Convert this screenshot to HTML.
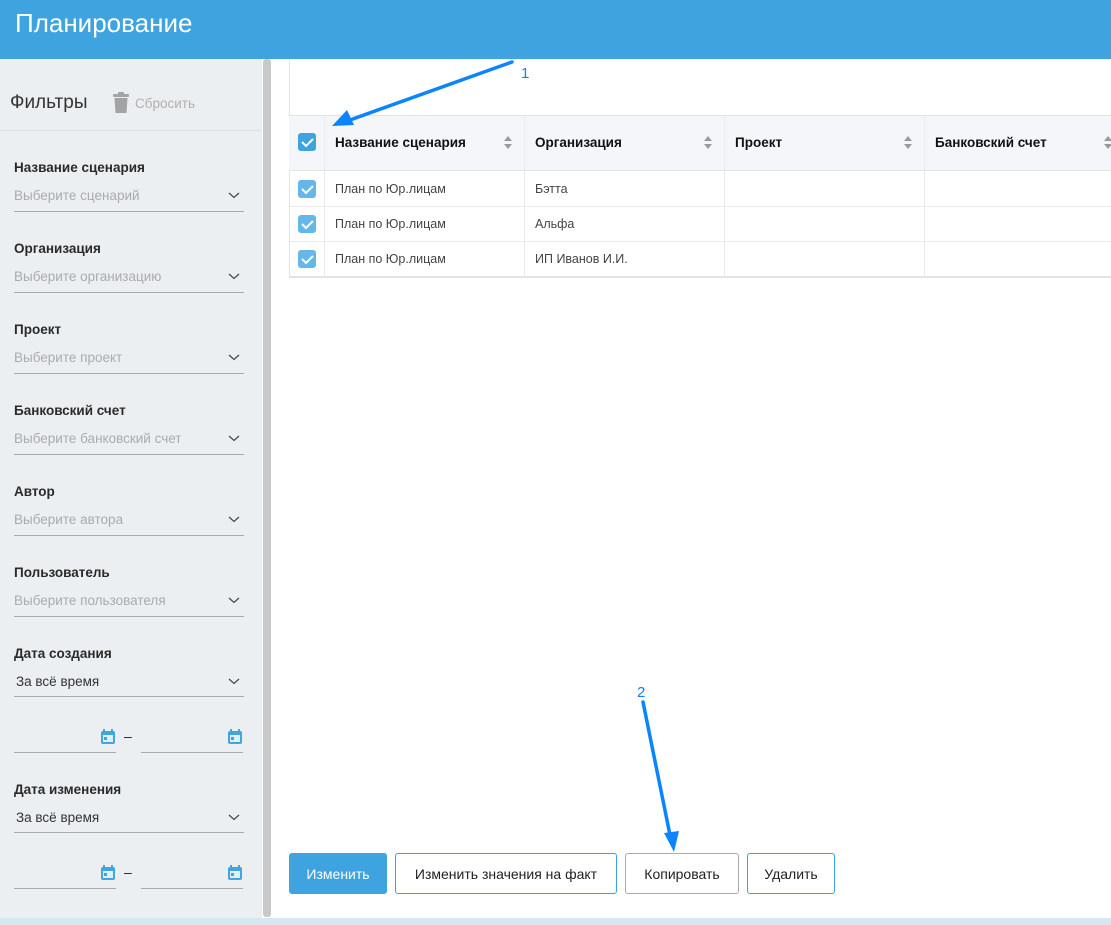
<!DOCTYPE html>
<html><head><meta charset="utf-8"><style>
*{margin:0;padding:0;box-sizing:border-box}
body{width:1111px;height:925px;position:relative;overflow:hidden;background:#fff;font-family:"Liberation Sans","DejaVu Sans",sans-serif;color:#222}
.a{position:absolute}
.hdr{left:0;top:0;width:1111px;height:59px;background:#3ea3df;color:#fff;font-size:26px;padding:8px 0 0 15px}
.side{left:0;top:59px;width:262px;height:859px;background:#eceff2}
.sb{left:263px;top:59px;width:8px;height:858px;background:#c9c9c9;border-radius:3px}
.lbl{left:14px;font-size:13.5px;font-weight:bold;color:#2a2a2a}
.ph{left:14px;font-size:13.5px;color:#a9abae}
.val{left:16px;font-size:13.5px;color:#333}
.ln{height:1px;background:#aaa}
.th{font-size:13.5px;font-weight:bold;color:#111}
.td{font-size:12.5px;color:#444}
.btn{top:853px;height:41px;border:1px solid #3ea3df;border-radius:3px;font-size:14px;display:flex;align-items:center;justify-content:center;color:#222;background:#fff}
</style></head><body>
<div class="a hdr">Планирование</div>
<div class="a side"></div>
<div class="a sb"></div>
<div class="a" style="left:0;top:918px;width:1111px;height:7px;background:#d3e8f0"></div>

<div class="a" style="left:10px;top:92px;font-size:19px;color:#333">Фильтры</div>
<svg class="a" style="left:112px;top:92px" width="18" height="21" viewBox="0 0 18 21"><rect x="1" y="2" width="16" height="3" rx="1" fill="#a3a3a3"/><rect x="6" y="0" width="6" height="3" rx="1" fill="#a3a3a3"/><path d="M2.5 6h13l-1 15h-11z" fill="#a3a3a3"/></svg>
<div class="a" style="left:135px;top:96px;font-size:13.5px;color:#b0b0b0">Сбросить</div>
<div class="a" style="left:0;top:130px;width:262px;height:1px;background:#dde0e3"></div>

<div class="a lbl" style="top:160px">Название сценария</div><div class="a ph" style="top:188px">Выберите сценарий</div><div class="a ln" style="left:14px;top:211px;width:230px"></div>
<div class="a lbl" style="top:241px">Организация</div><div class="a ph" style="top:269px">Выберите организацию</div><div class="a ln" style="left:14px;top:292px;width:230px"></div>
<div class="a lbl" style="top:322px">Проект</div><div class="a ph" style="top:350px">Выберите проект</div><div class="a ln" style="left:14px;top:373px;width:230px"></div>
<div class="a lbl" style="top:403px">Банковский счет</div><div class="a ph" style="top:431px">Выберите банковский счет</div><div class="a ln" style="left:14px;top:454px;width:230px"></div>
<div class="a lbl" style="top:484px">Автор</div><div class="a ph" style="top:512px">Выберите автора</div><div class="a ln" style="left:14px;top:535px;width:230px"></div>
<div class="a lbl" style="top:565px">Пользователь</div><div class="a ph" style="top:593px">Выберите пользователя</div><div class="a ln" style="left:14px;top:616px;width:230px"></div>
<div class="a lbl" style="top:646px">Дата создания</div><div class="a val" style="top:674px">За всё время</div><div class="a ln" style="left:14px;top:696px;width:230px"></div>
<div class="a ln" style="left:14px;top:752px;width:102px"></div><div class="a ln" style="left:141px;top:752px;width:102px"></div>
<div class="a" style="left:124px;top:728px;font-size:14px">–</div>
<div class="a lbl" style="top:782px">Дата изменения</div><div class="a val" style="top:810px">За всё время</div><div class="a ln" style="left:14px;top:832px;width:230px"></div>
<div class="a ln" style="left:14px;top:888px;width:102px"></div><div class="a ln" style="left:141px;top:888px;width:102px"></div>
<div class="a" style="left:124px;top:864px;font-size:14px">–</div>

<svg class="a" style="left:0;top:0" width="262" height="918">
<g fill="none" stroke="#444" stroke-width="1.2">
<path d="M229 193l5 4.5 5-4.5"/><path d="M229 274l5 4.5 5-4.5"/><path d="M229 355l5 4.5 5-4.5"/><path d="M229 436l5 4.5 5-4.5"/><path d="M229 517l5 4.5 5-4.5"/><path d="M229 598l5 4.5 5-4.5"/><path d="M229 679l5 4.5 5-4.5"/><path d="M229 815l5 4.5 5-4.5"/>
</g>
<g id="cal"><rect x="101" y="731" width="14" height="13" rx="2" fill="#42a5e0"/><rect x="103" y="735" width="10" height="7" fill="#dff0fa"/><rect x="104" y="737" width="3" height="3" fill="#42a5e0"/><rect x="103" y="729" width="2" height="3" fill="#42a5e0"/><rect x="111" y="729" width="2" height="3" fill="#42a5e0"/></g>
<use href="#cal" x="127"/><use href="#cal" y="136"/><use href="#cal" x="127" y="136"/>
</svg>

<div class="a" style="left:289px;top:59px;width:1px;height:218px;background:#e3e3e3"></div>
<div class="a" style="left:289px;top:115px;width:822px;height:56px;background:#f5f6fa;border-top:1px solid #e3e3e3;border-bottom:1px solid #e3e3e3"></div>
<div class="a" style="left:289px;top:206px;width:822px;height:1px;background:#ebebeb"></div>
<div class="a" style="left:289px;top:241px;width:822px;height:1px;background:#ebebeb"></div>
<div class="a" style="left:289px;top:276px;width:822px;height:2px;background:#e3e3e3"></div>
<div class="a" style="left:324px;top:116px;width:1px;height:161px;background:#ebebeb"></div>
<div class="a" style="left:524px;top:116px;width:1px;height:161px;background:#ebebeb"></div>
<div class="a" style="left:724px;top:116px;width:1px;height:161px;background:#ebebeb"></div>
<div class="a" style="left:924px;top:116px;width:1px;height:161px;background:#ebebeb"></div>

<div class="a th" style="left:335px;top:135px">Название сценария</div>
<div class="a th" style="left:535px;top:135px">Организация</div>
<div class="a th" style="left:735px;top:135px">Проект</div>
<div class="a th" style="left:935px;top:135px">Банковский счет</div>
<div class="a td" style="left:335px;top:182px">План по Юр.лицам</div><div class="a td" style="left:535px;top:182px">Бэтта</div>
<div class="a td" style="left:335px;top:217px">План по Юр.лицам</div><div class="a td" style="left:535px;top:217px">Альфа</div>
<div class="a td" style="left:335px;top:252px">План по Юр.лицам</div><div class="a td" style="left:535px;top:252px">ИП Иванов И.И.</div>

<svg class="a" style="left:0;top:0" width="1111" height="925">
<defs><g id="srt"><path d="M0 5l4-5 4 5z M0 8l4 5 4-5z" fill="#9a9a9a"/></g></defs>
<use href="#srt" x="504" y="136"/><use href="#srt" x="704" y="136"/><use href="#srt" x="904" y="136"/><use href="#srt" x="1104" y="136"/>
<rect x="298" y="133" width="18" height="18" rx="3" fill="#3ea3df"/><path d="M302 142l4 4 7-7" stroke="#fff" stroke-width="2" fill="none"/>
<rect x="298" y="180" width="18" height="18" rx="3" fill="#64b7e8"/><path d="M302 189l4 4 7-7" stroke="#fff" stroke-width="2" fill="none"/>
<rect x="298" y="215" width="18" height="18" rx="3" fill="#64b7e8"/><path d="M302 224l4 4 7-7" stroke="#fff" stroke-width="2" fill="none"/>
<rect x="298" y="250" width="18" height="18" rx="3" fill="#64b7e8"/><path d="M302 259l4 4 7-7" stroke="#fff" stroke-width="2" fill="none"/>
<path d="M512 62L350 120" stroke="#0a84ff" stroke-width="3.5" stroke-linecap="round"/>
<path d="M332 126l15-16 7 15z" fill="#0a84ff"/>
<text x="521" y="78" font-size="15" fill="#0a84ff" font-family="Liberation Sans">1</text>
<path d="M643 702L670 835" stroke="#0a84ff" stroke-width="3.5" stroke-linecap="round"/>
<path d="M674 852l-10-19 15-2z" fill="#0a84ff"/>
<text x="637" y="697" font-size="15" fill="#0a84ff" font-family="Liberation Sans">2</text>
</svg>

<div class="a btn" style="left:289px;width:98px;background:#3ea3df;color:#fff">Изменить</div>
<div class="a btn" style="left:395px;width:222px">Изменить значения на факт</div>
<div class="a btn" style="left:625px;width:114px;border-color:#aaa">Копировать</div>
<div class="a btn" style="left:747px;width:88px">Удалить</div>
</body></html>
